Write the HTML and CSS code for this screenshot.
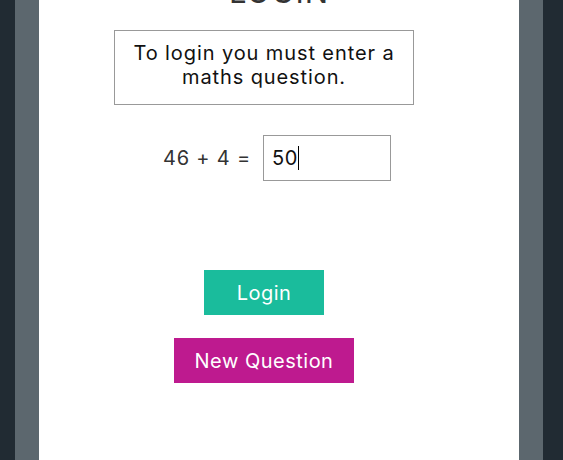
FILE: index.html
```html
<!DOCTYPE html>
<html>
<head>
<meta charset="utf-8">
<link rel="stylesheet" href="styles.css">
</head>
<body>
<div class="frame">
  <h1 class="title">LOGIN</h1>
  <div class="content">
    <p class="note">To login you must enter a maths question.</p>
    <div class="equation">
      <span class="sum">46 + 4 =</span>
      <div class="answer"><span>50</span><span class="caret"></span></div>
    </div>
    <div class="actions">
      <button class="btn btn-login">Login</button>
      <button class="btn btn-new">New Question</button>
    </div>
  </div>
</div>
</body>
</html>
```

FILE: styles.css
```css
html, body {
  margin: 0;
  padding: 0;
  height: 100%;
  overflow: hidden;
}
body {
  background: #212b33;
  font-family: Inter, Lato, sans-serif;
}
.frame {
  margin-left: 15px;
  width: 480px;
  height: 460px;
  background: #fff;
  border-left: 24px solid #5c676e;
  border-right: 24px solid #5c676e;
  overflow: hidden;
}
.title {
  margin: -22px 0 0 0;
  text-align: center;
  font-size: 31px;
  font-weight: 400;
  letter-spacing: 1px;
  color: #333;
  line-height: 28px;
}
.content {
  width: 300px;
  margin-left: 75px;
}
.note {
  margin: 24px 0 0 0;
  border: 1px solid #999;
  height: 75px;
  box-sizing: border-box;
  padding: 10px 6px 0;
  text-align: center;
  font-size: 20px;
  letter-spacing: 0.9px;
  line-height: 24px;
  color: #111;
}
.equation {
  display: flex;
  align-items: center;
  margin-top: 30px;
  padding-left: 49px;
  gap: 12px;
}
.sum {
  font-size: 20px;
  letter-spacing: 0.8px;
  color: #333;
}
.answer {
  width: 128px;
  height: 46px;
  box-sizing: border-box;
  border: 1px solid #999;
  display: flex;
  align-items: center;
  padding-left: 8px;
  font-size: 20px;
  letter-spacing: 0.5px;
  color: #111;
}
.caret {
  display: inline-block;
  width: 1px;
  height: 24px;
  background: #000;
}
.actions {
  display: flex;
  flex-direction: column;
  align-items: center;
  gap: 23px;
  margin-top: 89px;
}
.btn {
  border: none;
  height: 45px;
  font-family: inherit;
  font-size: 20px;
  letter-spacing: 0.5px;
  color: #fff;
  padding: 0;
}
.btn-login {
  width: 120px;
  background: #1abc9c;
}
.btn-new {
  width: 180px;
  background: #be1a8f;
}
```
